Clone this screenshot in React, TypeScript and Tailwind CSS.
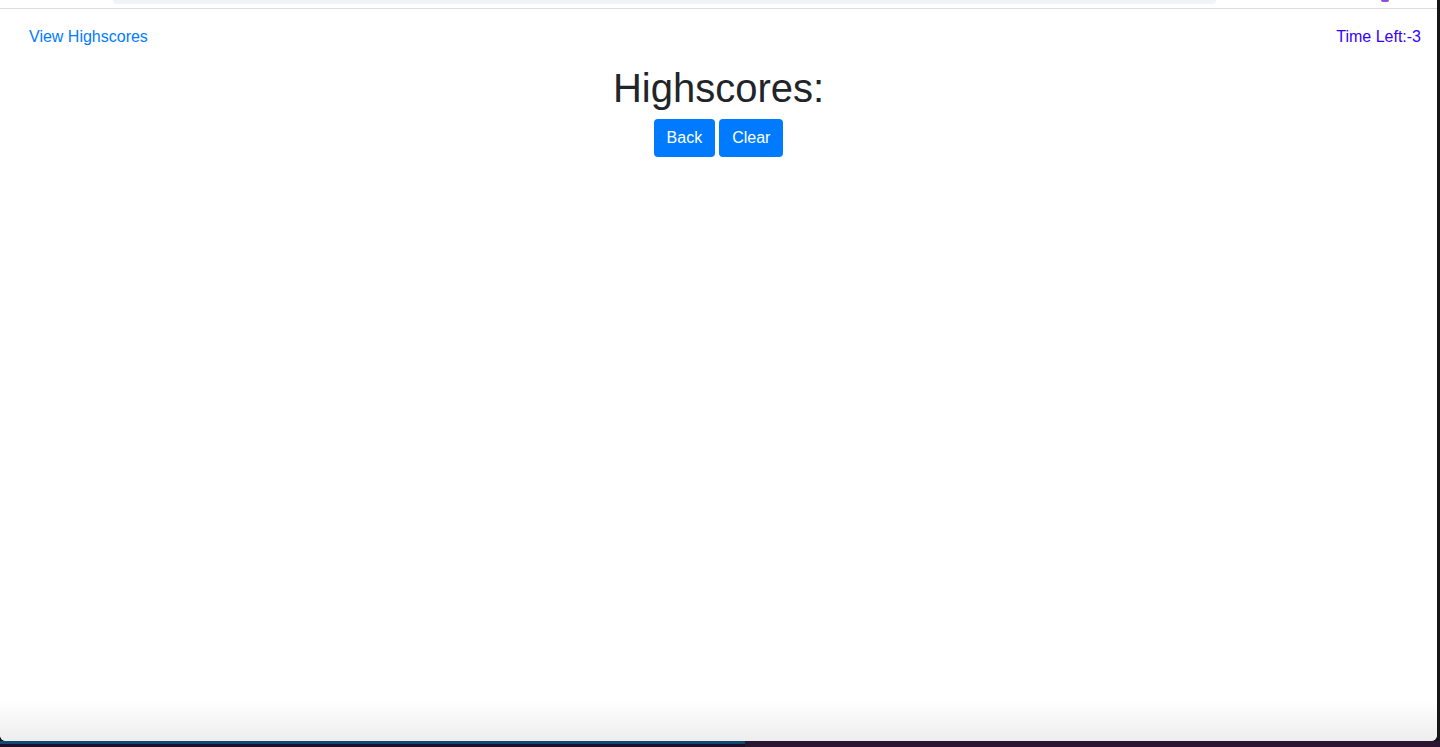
import React from "react";

export default function App() {
  return (
    <div
      className="w-[1440px] h-[747px] overflow-hidden flex flex-col bg-[#1d0f2a]"
      style={{ fontFamily: '"Liberation Sans", Arial, sans-serif' }}
    >
      <div className="flex flex-1">
        <div className="w-[1437px] h-[741px] flex flex-col bg-white rounded-b-[6px] overflow-hidden">
          {/* browser toolbar remnant */}
          <div className="h-[9px] flex bg-white border-b border-[#dadce0]">
            <div className="ml-[113px] w-[1103px] h-[4px] bg-[#f1f3f4] rounded-b-[10px]" />
            <div className="ml-[165px] w-[8px] h-[2px] bg-[#8a4fd8] rounded-b-full" />
          </div>
          {/* nav row */}
          <div className="flex justify-between items-center pl-[29px] pr-[16px] pt-[16px] pb-[15px] text-[16px] leading-[24px]">
            <a className="text-[#007bff]">View Highscores</a>
            <span className="text-[#3300ff]">Time Left:-3</span>
          </div>
          <div className="flex flex-col items-center">
            <h1 className="text-[40px] leading-[48px] text-[#212529] font-medium mb-[7px]">Highscores:</h1>
            <div className="flex gap-[4px]">
              <button className="bg-[#007bff] text-white text-[16px] leading-[24px] px-[13px] py-[7px] rounded-[4px]">Back</button>
              <button className="bg-[#007bff] text-white text-[16px] leading-[24px] px-[13px] py-[7px] rounded-[4px]">Clear</button>
            </div>
          </div>
          <div className="flex-1" />
          <div className="h-[40px] bg-gradient-to-b from-white to-[#ededed]" />
        </div>
        <div className="flex-1 bg-[#161616]" />
      </div>
      <div className="h-[6px] flex">
        <div className="w-[745px] h-[3px] bg-[#0e4a72]" />
        <div className="flex-1 bg-[#2a1633]" />
      </div>
    </div>
  );
}
